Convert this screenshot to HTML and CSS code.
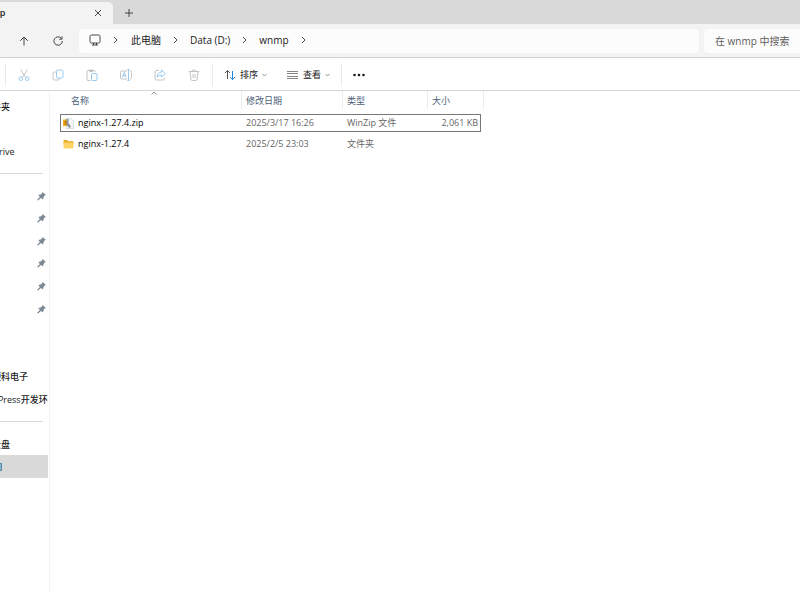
FILE: index.html
```
<!DOCTYPE html>
<html lang="zh-CN">
<head>
    <meta charset="UTF-8">
    <meta name="viewport" content="width=device-width, initial-scale=1.0">
    <title>wnmp</title>
    <link rel="stylesheet" href="styles.css">
</head>
<body>
    <header class="tabs">
        <div class="tab">
            <span class="tab-title">wnmp</span>
            <button class="icon-btn" aria-label="关闭标签页">
                <svg width="8" height="8" viewBox="0 0 8 8"><path d="M1 1l6 6M7 1L1 7" /></svg>
            </button>
        </div>
        <button class="icon-btn new-tab" aria-label="新建标签页">
            <svg width="8" height="8" viewBox="0 0 8 8"><path d="M4 0v8M0 4h8" /></svg>
        </button>
    </header>

    <div class="address-bar">
        <button class="icon-btn nav-btn" aria-label="向上">
            <svg width="10" height="10" viewBox="0 0 10 10"><path d="M5 9.5V1M1.2 4.8L5 1l3.8 3.8" /></svg>
        </button>
        <button class="icon-btn nav-btn" aria-label="刷新">
            <svg width="10" height="10" viewBox="0 0 10 10"><path d="M9.3 5A4.2 4.2 0 1 1 8.2 2.2M9 .4v2.8H6.2" /></svg>
        </button>
        <nav class="path">
            <svg width="12" height="12" viewBox="0 0 12 12"><rect x="1" y="1" width="10" height="8" rx="1.5" /><path d="M4.5 9v2M7.5 9v2M3 11h6" /></svg>
            <svg class="chevron" width="5" height="8" viewBox="0 0 5 8"><path d="M1 1l3 3-3 3" /></svg>
            <a href="#">此电脑</a>
            <svg class="chevron" width="5" height="8" viewBox="0 0 5 8"><path d="M1 1l3 3-3 3" /></svg>
            <a href="#">Data (D:)</a>
            <svg class="chevron" width="5" height="8" viewBox="0 0 5 8"><path d="M1 1l3 3-3 3" /></svg>
            <a href="#">wnmp</a>
            <svg class="chevron" width="5" height="8" viewBox="0 0 5 8"><path d="M1 1l3 3-3 3" /></svg>
        </nav>
        <input class="search" type="text" placeholder="在 wnmp 中搜索" aria-label="搜索">
    </div>

    <div class="toolbar">
        <div class="tool-group edit">
            <button class="icon-btn" aria-label="剪切">
                <svg width="12" height="12" viewBox="0 0 12 12"><path class="gray" d="M2.5 0.5l5 8M9.5 0.5l-5 8" /><circle class="blue" cx="2.8" cy="9.7" r="1.8" /><circle class="blue" cx="9.2" cy="9.7" r="1.8" /></svg>
            </button>
            <button class="icon-btn" aria-label="复制">
                <svg width="12" height="12" viewBox="0 0 12 12"><path class="gray" d="M4 3H2.5Q1 3 1 4.500v5Q1 11 2.500 11H6Q7.500 11 7.500 9.500" /><rect class="blue" x="4.500" y="1" width="6.500" height="8" rx="1.500" /></svg>
            </button>
            <button class="icon-btn" aria-label="粘贴">
                <svg width="12" height="12" viewBox="0 0 12 12"><path class="gray" d="M4.500 11.500H2Q1 11.500 1 10.500v-8Q1 1.500 2 1.500h6Q9 1.500 9 2.500V3M3.500 1h3v1.500h-3z" /><rect class="blue" x="5.500" y="4.500" width="5.500" height="7" rx="1" /></svg>
            </button>
            <button class="icon-btn" aria-label="重命名">
                <svg width="12" height="12" viewBox="0 0 12 12"><path class="gray" d="M7 2H2Q.5 2 .5 3.500v5Q.5 10 2 10h5M10 2q1.500 0 1.500 1.500v5Q11.500 10 10 10" /><path class="blue" d="M8.500 1v10M7.300 .6h2.400M7.300 11.400h2.400M2.300 8.200l1.900-4.600 1.900 4.600M3 6.800h2.400" /></svg>
            </button>
            <button class="icon-btn" aria-label="共享">
                <svg width="12" height="12" viewBox="0 0 12 12"><path class="gray" d="M5 1.500H2.500Q1 1.500 1 3v6.500Q1 11 2.500 11H9q1.500 0 1.500-1.500V8.500" /><path class="blue" d="M7.500 1l3.800 3.500L7.500 8V6Q4.500 6 3 8.200 3.500 3.500 7.500 3z" /></svg>
            </button>
            <button class="icon-btn" aria-label="删除">
                <svg width="12" height="12" viewBox="0 0 12 12"><path class="gray" d="M.8 2.500h10.400M4.200 2.500Q4.200.8 6 .8t1.800 1.700M2 2.500l.8 7.500q.2 1.500 1.500 1.500h3.400q1.300 0 1.500-1.500L10 2.500M5 5v4M7 5v4" /></svg>
            </button>
        </div>
        <div class="tool-group">
            <button class="text-btn">
                <svg width="12" height="12" viewBox="0 0 12 12"><path class="dark" d="M3.500 10V1.500M1 4l2.500-2.500L6 4" /><path class="bright" d="M8.500 2v8.500M6 8l2.500 2.500L11 8" /></svg>
                排序
                <svg class="caret" width="5" height="4" viewBox="0 0 5 4"><path d="M.5 1l2 2 2-2" /></svg>
            </button>
            <button class="text-btn">
                <svg width="12" height="12" viewBox="0 0 12 12"><path class="lines" d="M0 2.500h11M0 4.500h11M0 7.500h11M0 9.500h11" /></svg>
                查看
                <svg class="caret" width="5" height="4" viewBox="0 0 5 4"><path d="M.5 1l2 2 2-2" /></svg>
            </button>
        </div>
        <button class="icon-btn more" aria-label="更多">
            <svg width="12" height="4" viewBox="0 0 12 4"><circle cx="1.500" cy="2" r="1.300" /><circle cx="6" cy="2" r="1.300" /><circle cx="10.500" cy="2" r="1.300" /></svg>
        </button>
    </div>

    <main class="content">
        <nav class="sidebar">
            <ul class="tree">
                <li><a class="level-2" href="#">文件夹</a></li>
                <li></li>
                <li><a href="#">OneDrive</a></li>
                <li><hr></li>
                <li class="pinned"><svg width="9" height="9" viewBox="0 0 9 9"><path d="M5.500 0L9 3 7.500 3.500 6.500 5.500 6 7.500 4 6 1 8.500 0 8 2.800 5 1.300 3 3.500 2.500 5 1.500z" /></svg></li>
                <li class="pinned"><svg width="9" height="9" viewBox="0 0 9 9"><path d="M5.500 0L9 3 7.500 3.500 6.500 5.500 6 7.500 4 6 1 8.500 0 8 2.800 5 1.300 3 3.500 2.500 5 1.500z" /></svg></li>
                <li class="pinned"><svg width="9" height="9" viewBox="0 0 9 9"><path d="M5.500 0L9 3 7.500 3.500 6.500 5.500 6 7.500 4 6 1 8.500 0 8 2.800 5 1.300 3 3.500 2.500 5 1.500z" /></svg></li>
                <li class="pinned"><svg width="9" height="9" viewBox="0 0 9 9"><path d="M5.500 0L9 3 7.500 3.500 6.500 5.500 6 7.500 4 6 1 8.500 0 8 2.800 5 1.300 3 3.500 2.500 5 1.500z" /></svg></li>
                <li class="pinned"><svg width="9" height="9" viewBox="0 0 9 9"><path d="M5.500 0L9 3 7.500 3.500 6.500 5.500 6 7.500 4 6 1 8.500 0 8 2.800 5 1.300 3 3.500 2.500 5 1.500z" /></svg></li>
                <li class="pinned"><svg width="9" height="9" viewBox="0 0 9 9"><path d="M5.500 0L9 3 7.500 3.500 6.500 5.500 6 7.500 4 6 1 8.500 0 8 2.800 5 1.300 3 3.500 2.500 5 1.500z" /></svg></li>
                <li></li>
                <li></li>
                <li><a class="level-3" href="#">硬科电子</a></li>
                <li><a href="#">WordPress开发环境</a></li>
                <li><hr></li>
                <li><a class="level-3" href="#">云盘</a></li>
                <li class="selected"><svg width="2" height="8" viewBox="0 0 2 8"><path fill="#8fb4d0" d="M0 .5h1.500v7H0" /></svg></li>
            </ul>
        </nav>

        <div class="files">
            <table>
                <colgroup>
                    <col class="col-name">
                    <col class="col-date">
                    <col class="col-type">
                    <col class="col-size">
                </colgroup>
                <thead>
                    <tr>
                        <th>名称<svg class="sort" width="6" height="4" viewBox="0 0 6 4"><path d="M.5 3.500L3 1l2.500 2.500" /></svg></th>
                        <th>修改日期</th>
                        <th>类型</th>
                        <th colspan="2">大小</th>
                    </tr>
                </thead>
                <tbody>
                    <tr class="focused">
                        <td class="name"><svg width="11" height="11" viewBox="0 0 11 11"><path fill="#f4f6f8" stroke="#c3cad2" stroke-width=".6" d="M3 .5h5l2.500 2.500v7.500H3z" /><path fill="#f2ad1c" d="M0 1.500h4.500V8H0z" /><path fill="#8593a3" d="M3.500 1h2v4l2.500 3.500-1.500 1.500L3.500 7z" /><path fill="#b06f00" d="M1.500 3h2v1l-1 1.500h1v1h-2v-1l1-1.500h-1z" /></svg>nginx-1.27.4.zip</td>
                        <td>2025/3/17 16:26</td>
                        <td>WinZip 文件</td>
                        <td class="size">2,061 KB</td>
                    </tr>
                    <tr>
                        <td class="name"><svg width="11" height="11" viewBox="0 0 11 11"><path fill="#e9a92b" d="M.5 2q0-1 1-1h2.500l1.200 1.200H9.500q1 0 1 1V5H.5z" /><path fill="#ffd466" d="M.5 3.500h10v5q0 1-1 1h-8q-1 0-1-1z" /></svg>nginx-1.27.4</td>
                        <td>2025/2/5 23:03</td>
                        <td>文件夹</td>
                        <td class="size"></td>
                    </tr>
                </tbody>
            </table>
        </div>
    </main>
</body>
</html>
```

FILE: styles.css
```
* {
    box-sizing: border-box;
}
body {
    margin: 0;
    min-height: 100vh;
    display: flex;
    flex-direction: column;
    font-family: "Open Sans", "Noto Sans CJK SC", sans-serif;
    font-size: 9px;
    line-height: 16px;
    color: #1b1b1b;
    background: #fff;
    overflow: hidden;
}
svg {
    flex: none;
    fill: none;
    stroke: #333;
    stroke-width: 0.9;
}
a {
    color: inherit;
    text-decoration: none;
}
button {
    font: inherit;
    color: inherit;
    background: none;
    border: none;
    padding: 0;
}
.icon-btn {
    display: flex;
    align-items: center;
    justify-content: center;
}

/* tabs */
.tabs {
    display: flex;
    height: 24px;
    padding-top: 2px;
    background: #d9d9d9;
}
.tab {
    display: flex;
    align-items: center;
    justify-content: space-between;
    width: 113px;
    padding-right: 11px;
    background: #f3f3f3;
    border-radius: 0 5px 0 0;
}
.tab-title {
    margin-left: -22px;
    font-weight: 600;
}
.new-tab {
    width: 32px;
}

/* address bar */
.address-bar {
    display: flex;
    align-items: center;
    height: 34px;
    padding-left: 7px;
    background: #f3f3f3;
    border-bottom: 1px solid #d2d2d2;
    font-size: 10px;
}
.nav-btn {
    width: 34px;
}
.path {
    flex: 1;
    display: flex;
    align-items: center;
    height: 24px;
    margin-left: 4px;
    padding: 0 0 2px 10px;
    background: #fcfcfc;
    border-radius: 4px;
}
.path .chevron {
    margin: 0 12px;
}
.path a:first-of-type {
    margin-left: 1px;
}
.search {
    width: 96px;
    height: 24px;
    margin-left: 5px;
    padding: 0 0 0 11px;
    border: none;
    border-radius: 4px 0 0 4px;
    background: #fcfcfc;
    font: inherit;
}
.search::placeholder {
    color: #5c5c5c;
    opacity: 1;
}

/* toolbar */
.toolbar {
    display: flex;
    align-items: center;
    height: 33px;
    padding: 1px 0 0 5px;
    border-bottom: 1px solid #d6d6d6;
}
.tool-group {
    display: flex;
    align-items: center;
    gap: 20px;
    height: 23px;
    padding: 0 11px;
    border-right: 1px solid #ebebeb;
}
.edit {
    gap: 22px;
    padding: 0 12px;
    border-left: 1px solid #ebebeb;
}
.text-btn {
    display: flex;
    align-items: center;
    gap: 4px;
}
.gray {
    stroke: #bcbcbc;
}
.blue {
    stroke: #8cc4ee;
}
.dark {
    stroke: #444;
}
.bright {
    stroke: #0078d4;
}
.lines {
    stroke: #777;
}
.caret {
    stroke: #888;
}
.more {
    padding: 0 11px;
}
.more svg {
    fill: #1b1b1b;
    stroke: none;
}

/* sidebar */
.content {
    flex: 1;
    display: flex;
    padding-bottom: 12px;
}
.sidebar {
    width: 50px;
    padding: 4px 1px 0 0;
    border-right: 1px solid #f4f4f4;
}
.tree {
    display: grid;
    grid-template-rows: repeat(17, 1fr);
    height: 383px;
    margin: 0;
    padding: 0;
    list-style: none;
    overflow: hidden;
}
.tree li {
    display: flex;
    align-items: center;
    min-width: 0;
    white-space: nowrap;
}
.tree a {
    margin-left: -25px;
    padding-top: 1px;
    font-weight: 500;
}
.tree .level-2 {
    margin-left: -17px;
}
.tree .level-3 {
    margin-left: -8px;
}
.tree hr {
    width: 43px;
    margin: 0;
    border: none;
    border-top: 1px solid #d9d9d9;
}
.tree .pinned {
    justify-content: flex-end;
    padding-right: 2px;
}
.pinned svg {
    fill: #7d8a96;
    stroke: none;
}
.tree .selected {
    background: #d9d9d9;
}
.selected svg {
    stroke: #4a7fa5;
}

/* file list */
.files {
    flex: 1;
    padding-left: 10px;
}
table {
    width: 424px;
    table-layout: fixed;
    border-collapse: separate;
    border-spacing: 0;
    color: #666;
}
.col-name {
    width: 182px;
}
.col-date {
    width: 101px;
}
.col-type {
    width: 85px;
}
.col-size {
    width: 53px;
}
th {
    position: relative;
    height: 18px;
    padding: 2px 0 0 4px;
    border-right: 1px solid #ececec;
    font-weight: normal;
    text-align: left;
    color: #4c607a;
}
th:first-child {
    padding-left: 11px;
}
.sort {
    position: absolute;
    top: 0;
    left: 50%;
    stroke: #888;
}
thead::after {
    content: "";
    display: block;
    height: 5px;
}
td {
    height: 22px;
    padding: 1px 0 0 4px;
}
.name {
    padding-left: 3px;
    font-weight: 500;
    color: #000;
}
.name svg {
    margin-right: 4px;
    vertical-align: middle;
    stroke: none;
}
.size {
    padding-right: 2px;
    text-align: right;
}
.focused td {
    height: 18px;
    padding-top: 0;
    border: 1px solid #777;
    border-width: 1px 0;
}
.focused .name {
    padding-left: 2px;
    border-left-width: 1px;
}
.focused td:last-child {
    border-right-width: 1px;
}
```
